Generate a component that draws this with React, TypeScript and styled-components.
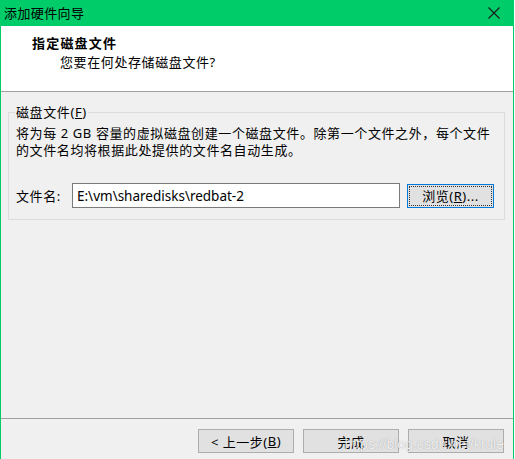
import * as React from 'react';
import styled, { createGlobalStyle } from 'styled-components';

const colors = {
  accent: '#00cc6a',
  face: '#f0f0f0',
  line: '#a0a0a0',
  group: '#dcdcdc',
  button: '#e1e1e1',
  buttonBorder: '#adadad',
  focus: '#0078d7',
};

const font = `"Noto Sans", "Noto Sans CJK SC", sans-serif`;

const GlobalStyle = createGlobalStyle`
  html, body {
    margin: 0;
    padding: 0;
    background: #fff;
  }
  body {
    font-family: ${font};
    font-size: 13px;
    color: #000;
  }
`;

const App = () => (
  <>
    <GlobalStyle />
    <Window>
      <TitleBar>
        <Caption>添加硬件向导</Caption>
        <CloseButton aria-label="关闭">
          <svg width="12" height="12" viewBox="0 0 12 12">
            <path d="M0.5 0.5 L11.5 11.5 M11.5 0.5 L0.5 11.5" stroke="#1a1a1a" strokeWidth="1.1" fill="none" />
          </svg>
        </CloseButton>
      </TitleBar>

      <Header>
        <HeaderTitle>指定磁盘文件</HeaderTitle>
        <HeaderSub>您要在何处存储磁盘文件?</HeaderSub>
      </Header>

      <Body>
        <Group>
          <Legend>
            磁盘文件(<u>F</u>)
          </Legend>
          <Note>
            将为每 2 GB 容量的虚拟磁盘创建一个磁盘文件。除第一个文件之外，每个文件
            <br />
            的文件名均将根据此处提供的文件名自动生成。
          </Note>
          <FileRow>
            <Label>文件名:</Label>
            <PathInput defaultValue="E:\vm\sharedisks\redbat-2" />
            <Button $focused $width={87}>
              <Focus>
                浏览(<u>R</u>)...
              </Focus>
            </Button>
          </FileRow>
        </Group>
      </Body>

      <Footer>
        <Button>
          &lt; 上一步(<u>B</u>)
        </Button>
        <Button>完成</Button>
        <Button>取消</Button>
        <Watermark>https://blog.csdn.net/kruie</Watermark>
      </Footer>
    </Window>
  </>
);

const Window = styled.div`
  width: 514px;
  height: 459px;
  box-sizing: border-box;
  border-left: 1px solid ${colors.accent};
  border-right: 1px solid ${colors.accent};
  display: flex;
  flex-direction: column;
  overflow: hidden;
  background: ${colors.face};
`;

const TitleBar = styled.div`
  height: 26px;
  flex: none;
  background: ${colors.accent};
  display: flex;
  align-items: center;
  padding: 0 13px 0 3px;
`;

const Caption = styled.div`
  flex: 1;
  letter-spacing: 0.4px;
  line-height: 26px;
`;

const CloseButton = styled.div`
  width: 12px;
  height: 12px;
  display: flex;
`;

const Header = styled.div`
  height: 66px;
  flex: none;
  box-sizing: border-box;
  background: #fff;
  border-bottom: 1px solid ${colors.line};
  padding: 9px 0 0 31px;
`;

const HeaderTitle = styled.div`
  font-weight: bold;
  letter-spacing: 1.2px;
  line-height: 17px;
`;

const HeaderSub = styled.div`
  margin: 2px 0 0 28px;
  letter-spacing: 0.6px;
  line-height: 17px;
`;

const Body = styled.div`
  flex: 1;
  padding: 11px 8px 0 7px;
`;

const Group = styled.fieldset`
  margin: 0;
  padding: 0 9px 11px 7px;
  border: 1px solid ${colors.group};
  min-width: 0;
`;

const Legend = styled.legend`
  padding: 0 1px;
  margin-left: -1px;
  line-height: 18px;
  letter-spacing: 0.6px;
`;

const Note = styled.p`
  margin: 4px 0 0;
  line-height: 17px;
  letter-spacing: 0.6px;
  white-space: nowrap;
`;

const FileRow = styled.div`
  margin-top: 24px;
  display: flex;
  align-items: center;
  gap: 7px;
`;

const Label = styled.span`
  width: 52px;
  flex: none;
  letter-spacing: 0.6px;
  margin-right: -3px;
  white-space: nowrap;
`;

const PathInput = styled.input`
  width: 328px;
  height: 25px;
  flex: none;
  box-sizing: border-box;
  border: 1px solid #7a7a7a;
  background: #fff;
  padding: 0 4px;
  font-family: ${font};
  font-size: 13.5px;
  color: #000;
  outline: none;
`;

const Button = styled.div<{ $focused?: boolean; $width?: number }>`
  width: ${p => p.$width ?? 96}px;
  height: 24px;
  flex: none;
  box-sizing: border-box;
  background: ${colors.button};
  border: 1px solid ${p => (p.$focused ? colors.focus : colors.buttonBorder)};
  display: flex;
  align-items: center;
  justify-content: center;
  letter-spacing: 0.5px;
  padding: ${p => (p.$focused ? '1px' : '0')};
`;

const Focus = styled.div`
  flex: 1;
  align-self: stretch;
  display: flex;
  align-items: center;
  justify-content: center;
  outline: 1px dotted #333;
  outline-offset: -1px;
`;

const Footer = styled.div`
  position: relative;
  height: 41px;
  flex: none;
  box-sizing: border-box;
  border-top: 1px solid ${colors.line};
  display: flex;
  justify-content: flex-end;
  align-items: flex-start;
  gap: 9px;
  padding: 10px 9px 0 0;
`;

const Watermark = styled.div`
  position: absolute;
  right: 9px;
  top: 17px;
  font-family: "Liberation Sans", Arial, sans-serif;
  font-size: 14px;
  color: rgba(255, 255, 255, 0.85);
  text-shadow: 0 0 1px rgba(0, 0, 0, 0.35);
  pointer-events: none;
`;

export default App;
